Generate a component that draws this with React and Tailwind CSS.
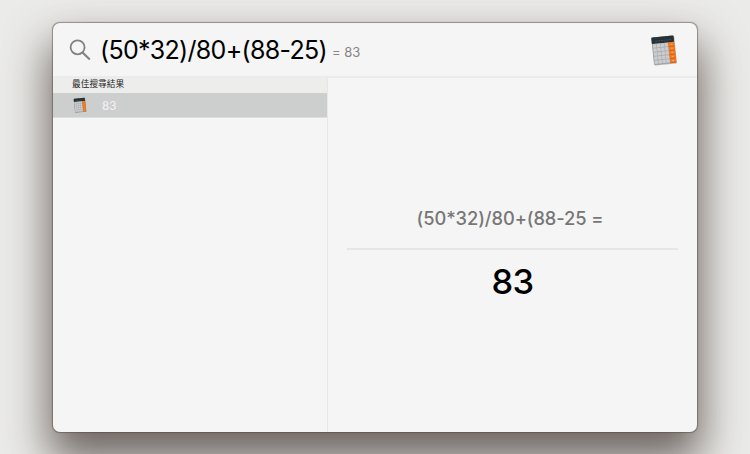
import React from 'react';

const query = '(50*32)/80+(88-25)';
const preview = '(50*32)/80+(88-25 =';
const result = '83';

const keyRows = [14.5, 20, 25.5, 31, 36.5];
const keyCols = [3.2, 7.4, 11.6, 15.8];

const CalculatorIcon = ({ className }) => (
  <svg viewBox="0 0 32 36" className={className} aria-hidden="true">
    <g transform="rotate(-6 16 18)">
      <rect x="5.2" y="5.4" width="22.4" height="27.2" rx="1" fill="#000" opacity="0.25" />
      <g transform="translate(4.6 4.4) scale(0.93 0.74)">
        <rect x="0" y="0" width="24" height="37" rx="1.2" fill="#8e9294" />
        <rect x="0" y="0" width="24" height="8.8" rx="1" fill="#263238" />
        <path d="M4 5.4H21" stroke="#46545a" strokeWidth="1.2" strokeDasharray="2 1" />
        <rect x="0.4" y="8.8" width="17.2" height="27.8" fill="#abaeb1" />
        <rect x="17.6" y="8.8" width="6.4" height="28" fill="#f9781a" />
        {keyRows.map((y) => (
          <g key={y}>
            {keyCols.map((x) => (
              <rect key={x} x={x - 2.2} y={y - 5} width="3.4" height="4.3" fill="#cbcdcf" />
            ))}
            <path d={`M17.6 ${y - 0.2}H24`} stroke="#c75f16" strokeWidth="0.8" />
            <path d={`M20 ${y - 2.8}H21.8`} stroke="#ffc08a" strokeWidth="0.9" />
          </g>
        ))}
      </g>
    </g>
  </svg>
);

const SearchIcon = () => (
  <svg viewBox="0 0 22 22" className="h-[22px] w-[22px] shrink-0" fill="none" stroke="#828282" aria-hidden="true">
    <circle cx="8.6" cy="8.3" r="7" strokeWidth="1.8" />
    <path d="M13.6 13.4L20.8 20.6" strokeWidth="2.1" />
  </svg>
);

const SearchBar = () => (
  <header className="flex h-[55px] shrink-0 items-center border-b-2 border-[#ebebeb] pr-[17px] pl-4">
    <SearchIcon />
    <div className="ml-[9px] flex items-center whitespace-pre">
      <span className="text-[25px] leading-[30px] tracking-[-0.7px] text-black">{query}</span>
      <span className="ml-[5px] pt-1 text-[13px] leading-4 text-[#858585]">= {result}</span>
    </div>
    <CalculatorIcon className="ml-auto h-9 w-8" />
  </header>
);

const ResultList = () => (
  <aside className="w-[275px] shrink-0 border-r border-[#e7e7e7]">
    <h2 className="h-[15px] bg-[#ededec] pl-[19px] text-[8.7px] leading-[13px] text-[#222]">最佳搜尋結果</h2>
    <div className="flex h-[25px] items-center border-b border-[#dededd] bg-[#cdcfce] pl-[19px]">
      <CalculatorIcon className="h-[18px] w-4" />
      <span className="ml-[14px] pt-0.5 text-[11.5px] leading-4 font-medium text-[#f3ecf6]">{result}</span>
    </div>
  </aside>
);

const Preview = () => (
  <section className="flex flex-1 flex-col px-[19px] pt-[127px] text-center">
    <p className="h-[43px] pr-[5px] text-[18.3px] leading-[27px] font-medium tracking-[-0.08px] whitespace-pre text-[#777]">
      {preview}
    </p>
    <div className="h-0.5 bg-[#e6e6e6]" />
    <p className="mt-[11px] text-[34.5px] leading-[42px] font-medium tracking-[-0.7px] text-black">{result}</p>
  </section>
);

const App = () => {
  return (
    <div
      className={`h-[454px] w-[750px] overflow-hidden bg-[#ebebe9] pt-[23px] pl-[53px] font-['Inter','Noto_Sans_CJK_TC',sans-serif] [font-feature-settings:'calt'_0]`}
    >
      <main className="flex h-[409px] w-[644px] flex-col overflow-hidden rounded-[7px] bg-[#f5f5f5] shadow-[0_0_1px_0.5px_rgba(80,65,60,0.5),0_24px_44px_4px_rgba(60,48,43,0.72)]">
        <SearchBar />
        <div className="flex flex-1">
          <ResultList />
          <Preview />
        </div>
      </main>
    </div>
  );
};

export default App;
